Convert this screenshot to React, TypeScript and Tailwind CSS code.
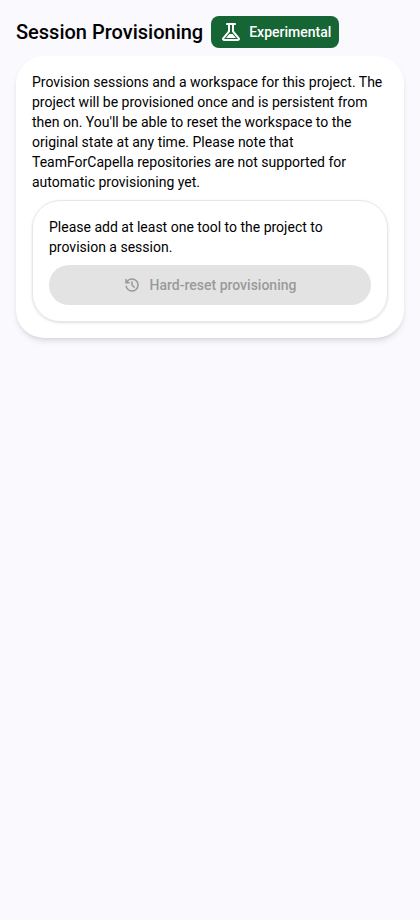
import React from "react";

function ScienceIcon() {
  return (
    <svg viewBox="0 -960 960 960" className="size-6 shrink-0" fill="currentColor" aria-hidden="true">
      <path d="M200-120q-51 0-72.5-45.5T138-250l222-270v-240h-40q-17 0-28.5-11.5T280-800q0-17 11.5-28.5T320-840h320q17 0 28.5 11.5T680-800q0 17-11.5 28.5T640-760h-40v240l222 270q32 39 10.5 84.5T760-120H200Zm80-120h400L544-400H416L280-240Zm-80 40h560L520-492v-268h-80v268L200-200Z" />
    </svg>
  );
}

function HistoryIcon() {
  return (
    <svg viewBox="0 -960 960 960" className="mr-[0.5px] -ml-[0.5px] size-[18px] shrink-0" fill="currentColor" aria-hidden="true">
      <path d="M480-120q-138 0-240.5-91.5T122-440h82q14 104 92.5 172T480-200q117 0 198.5-81.5T760-480q0-117-81.5-198.5T480-760q-69 0-129 32t-101 88h110v80H120v-240h80v94q51-64 124.5-99T480-840q75 0 140.5 28.5t114 77q48.5 48.5 77 114T840-480q0 75-28.5 140.5t-77 114q-48.5 48.5-114 77T480-120Zm112-192L440-464v-216h80v184l128 128-56 56Z" />
    </svg>
  );
}

export default function App() {
  return (
    <div className="min-h-screen bg-[#faf9fe] p-4 font-['Roboto',sans-serif] text-sm leading-5 text-black">
      <div className="flex items-center gap-2">
        <h1 className="text-xl leading-8 font-medium whitespace-nowrap">Session Provisioning</h1>
        <div className="flex h-8 items-center gap-1.5 rounded-lg bg-[#166534] px-2 text-white">
          <ScienceIcon />
          <span className="font-medium whitespace-nowrap">Experimental</span>
        </div>
      </div>
      <div className="mt-2 rounded-[28px] bg-white p-4 shadow-md">
        <p>
          Provision sessions and a workspace for this project. The project will be provisioned once and is
          persistent from then on. You'll be able to reset the workspace to the original state at any time.
          Please note that TeamForCapella repositories are not supported for automatic provisioning yet.
        </p>
        <div className="mt-2 rounded-[28px] border border-gray-200 p-4 shadow-sm">
          <p>Please add at least one tool to the project to provision a session.</p>
          <button
            className="mt-2 flex h-10 w-full items-center justify-center gap-2 rounded-full bg-[#e3e3e3] font-medium text-[#9a9a9a]"
            disabled
          >
            <HistoryIcon />
            Hard-reset provisioning
          </button>
        </div>
      </div>
    </div>
  );
}
